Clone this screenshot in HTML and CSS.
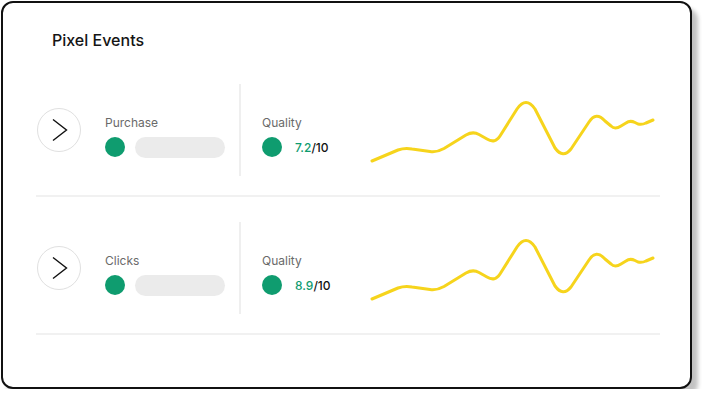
FILE: index.html
```html
<!DOCTYPE html>
<html lang="en">
<head>
  <meta charset="UTF-8" />
  <title>Pixel Events</title>
  <meta name="viewport" content="width=device-width, initial-scale=1.0" />
  <link rel="stylesheet" href="styles.css">
</head>
<body>

<div id="card">
  <h1 class="title">Pixel Events</h1>

  <div class="event-list">
    <div class="event">
      <div class="event-main">
        <div class="open-btn">
          <svg width="44" height="44" viewBox="0 0 44 44"><path d="M16 11.5 L29.5 22 L16 32.5" /></svg>
        </div>
        <div class="info">
          <div class="label">Purchase</div>
          <div class="info-row">
            <span class="dot"></span>
            <span class="pill"></span>
          </div>
        </div>
      </div>
      <div class="quality">
        <div class="label">Quality</div>
        <div class="info-row">
          <span class="dot"></span>
          <span class="score"><span class="score-value">7.2</span>/10</span>
        </div>
      </div>
      <svg class="chart" width="295" height="92" viewBox="0 0 295 92">
        <path d="M7 77 L33 66 Q40 63.5 47 65 L65 67.5 Q72 68.5 79 64.5 L101 51 Q108 47 114 50.5 L122 55 Q130 60 135 52 L152 25 Q161 12 170 25 L190 64 Q198 75 206 65 L224 38 Q231 27 240 37 L246 42 Q250 46 256 42 L261 39 Q265 36 270 38.5 L273 40 Q277 41 281 39 L288 36" />
      </svg>
    </div>

    <div class="event">
      <div class="event-main">
        <div class="open-btn">
          <svg width="44" height="44" viewBox="0 0 44 44"><path d="M16 11.5 L29.5 22 L16 32.5" /></svg>
        </div>
        <div class="info">
          <div class="label">Clicks</div>
          <div class="info-row">
            <span class="dot"></span>
            <span class="pill"></span>
          </div>
        </div>
      </div>
      <div class="quality">
        <div class="label">Quality</div>
        <div class="info-row">
          <span class="dot"></span>
          <span class="score"><span class="score-value">8.9</span>/10</span>
        </div>
      </div>
      <svg class="chart" width="295" height="92" viewBox="0 0 295 92">
        <path d="M7 77 L33 66 Q40 63.5 47 65 L65 67.5 Q72 68.5 79 64.5 L101 51 Q108 47 114 50.5 L122 55 Q130 60 135 52 L152 25 Q161 12 170 25 L190 64 Q198 75 206 65 L224 38 Q231 27 240 37 L246 42 Q250 46 256 42 L261 39 Q265 36 270 38.5 L273 40 Q277 41 281 39 L288 36" />
      </svg>
    </div>
  </div>
</div>

</body>
</html>
```

FILE: styles.css
```css
html, body {
  margin: 0; padding: 0;
  background: #fff;
  font-family: Inter, "Noto Sans", sans-serif;
}

#card {
  box-sizing: border-box;
  width: 691px; height: 388px;
  margin: 1px 0 0 1px;
  padding-top: 27px;
  background: #fff;
  border: 2px solid #111;
  border-radius: 12px;
  box-shadow: 6px 7px 4px rgba(0,0,0,0.24);
}

.title {
  margin: 0 0 9px 49px;
  font-size: 16px;
  line-height: 20px;
  font-weight: 500;
  color: #151515;
}

.event-list {
  padding: 0 30px 0 33px;
}

.event {
  display: flex;
  height: 92px;
  padding: 25px 0 19px;
  border-bottom: 2px solid #f1f1f1;
}

.event-main {
  display: flex;
  align-items: center;
  gap: 24px;
  width: 202px;
  padding-left: 1px;
  border-right: 2px solid #efefef;
}

.open-btn {
  box-sizing: border-box;
  width: 44px; height: 44px;
  border: 1px solid #e0e0e0;
  border-radius: 50%;
  position: relative;
}

.open-btn svg {
  position: absolute;
  top: -1px; left: -1px;
}

.open-btn path {
  fill: none;
  stroke: #111;
  stroke-width: 1.4;
}

.info {
  padding-top: 12px;
}

.label {
  font-size: 12px;
  line-height: 16px;
  color: #6a6a6a;
  margin-bottom: 6px;
}

.info-row {
  display: flex;
  align-items: center;
  gap: 10px;
}

.dot {
  width: 20px; height: 20px;
  border-radius: 50%;
  background: #0f9c6f;
}

.pill {
  width: 90px; height: 21px;
  border-radius: 11px;
  background: #ebebeb;
}

.quality {
  padding: 31px 0 0 21px;
}

.quality .info-row {
  gap: 13px;
}

.score {
  font-size: 12px;
  font-weight: 500;
  color: #111;
}

.score-value {
  color: #0f9c6f;
}

.chart {
  margin-left: auto;
}

.chart path {
  fill: none;
  stroke: #f6d41c;
  stroke-width: 3;
  stroke-linecap: round;
  stroke-linejoin: round;
}
```
